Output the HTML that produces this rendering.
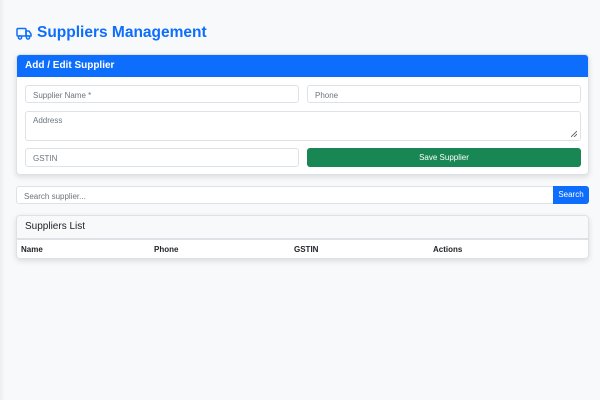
<!DOCTYPE html>
<html><head><style>
*{box-sizing:border-box;margin:0;padding:0}
body{width:600px;height:400px;background:#f8f9fa;font-family:"Liberation Sans",sans-serif;position:relative;overflow:hidden;color:#212529}
.a{position:absolute}
h1{position:absolute;left:37px;top:24px;font-size:15.5px;font-weight:bold;color:#0d6efd}
.card{position:absolute;left:16px;width:573px;background:#fff;border:1px solid #dee2e6;border-radius:4px;box-shadow:0 2px 6px rgba(0,0,0,.12);overflow:hidden}
.inp{position:absolute;background:#fff;border:1px solid #dee2e6;border-radius:3px;font-size:8px;color:#6c757d;padding:5px 7px}
.th{position:absolute;top:245px;font-size:8px;font-weight:bold}
</style></head><body>
<div class="a" style="left:0;top:0;width:5px;height:400px;background:linear-gradient(to right,#eceef0,#f8f9fa)"></div>
<svg class="a" style="left:16px;top:27px" width="16" height="13" viewBox="0 0 16 13" fill="none" stroke="#0d6efd" stroke-width="1.5"><rect x="1" y="1.5" width="9" height="7.5" rx="1"/><path d="M10 4h3l2 3v2h-5z"/><circle cx="4" cy="10.5" r="1.6" fill="#fff"/><circle cx="12" cy="10.5" r="1.6" fill="#fff"/></svg>
<h1>Suppliers Management</h1>
<div class="card" style="top:54px;height:121px">
<div style="background:#0d6efd;color:#fff;height:22px;font-size:10px;font-weight:bold;padding:5px 8px">Add / Edit Supplier</div>
</div>
<div class="inp" style="left:25px;top:85px;width:274px;height:18px">Supplier Name *</div>
<div class="inp" style="left:307px;top:85px;width:274px;height:18px">Phone</div>
<div class="inp" style="left:25px;top:111px;width:556px;height:30px;padding-top:4px">Address<svg style="position:absolute;right:3px;bottom:3px" width="6" height="6"><path d="M0 6L6 0M3 6L6 3" stroke="#555" stroke-width=".8"/></svg></div>
<div class="inp" style="left:25px;top:148px;width:274px;height:19px">GSTIN</div>
<div class="a" style="left:307px;top:148px;width:274px;height:19px;background:#198754;border-radius:3px;color:#fff;font-size:8px;text-align:center;line-height:19px">Save Supplier</div>
<div class="inp" style="left:16px;top:186px;width:538px;height:18px;border-radius:3px 0 0 3px">Search supplier...</div>
<div class="a" style="left:553px;top:186px;width:36px;height:18px;background:#0d6efd;border-radius:0 3px 3px 0;color:#fff;font-size:8px;text-align:center;line-height:18px">Search</div>
<div class="card" style="top:215px;height:44px">
<div style="background:#f8f9fa;height:24px;border-bottom:2px solid #dee2e6;font-size:10px;padding:5px 8px">Suppliers List</div>
</div>
<div class="th" style="left:21px">Name</div>
<div class="th" style="left:154px">Phone</div>
<div class="th" style="left:294px">GSTIN</div>
<div class="th" style="left:433px">Actions</div>
</body></html>
